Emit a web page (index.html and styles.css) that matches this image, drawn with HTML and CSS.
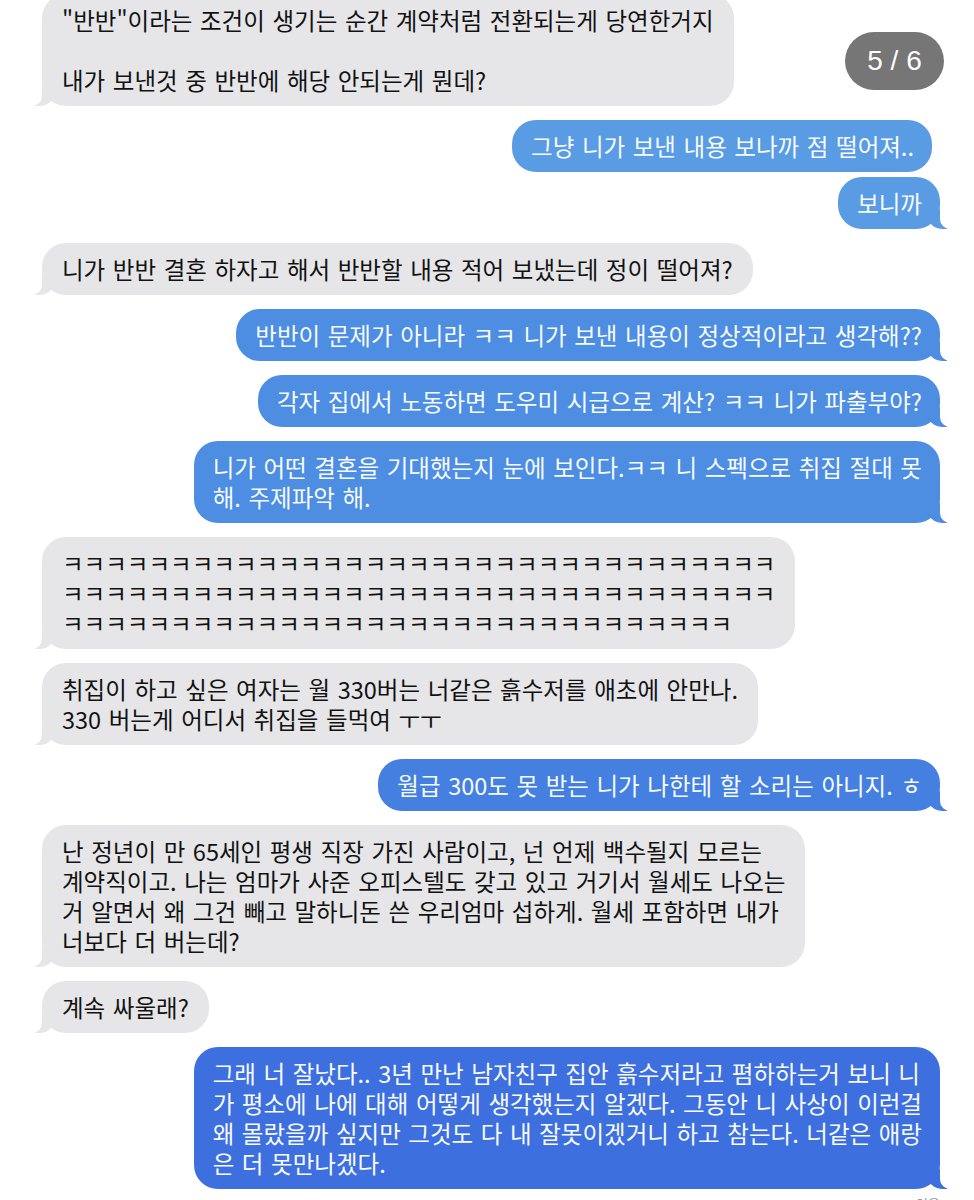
FILE: index.html
```html
<!DOCTYPE html>
<html lang="ko">
<head>
<meta charset="utf-8">
<title>대화</title>
<link rel="stylesheet" href="styles.css">
</head>
<body>
<div class="badge">5 / 6</div>
<main class="chat">
  <div class="msg in">"반반"이라는 조건이 생기는 순간 계약처럼 전환되는게 당연한거지<br><br>내가 보낸것 중 반반에 해당 안되는게 뭔데?</div>
  <div class="group">
    <div class="msg out c1 notail">그냥 니가 보낸 내용 보나까 점 떨어져..</div>
    <div class="msg out c1">보니까</div>
  </div>
  <div class="msg in">니가 반반 결혼 하자고 해서 반반할 내용 적어 보냈는데 정이 떨어져?</div>
  <div class="msg out c2">반반이 문제가 아니라 ㅋㅋ 니가 보낸 내용이 정상적이라고 생각해??</div>
  <div class="msg out c2">각자 집에서 노동하면 도우미 시급으로 계산? ㅋㅋ 니가 파출부야?</div>
  <div class="msg out c2">니가 어떤 결혼을 기대했는지 눈에 보인다.ㅋㅋ 니 스펙으로 취집 절대 못<br>해. 주제파악 해.</div>
  <div class="msg in">ㅋㅋㅋㅋㅋㅋㅋㅋㅋㅋㅋㅋㅋㅋㅋㅋㅋㅋㅋㅋㅋㅋㅋㅋㅋㅋㅋㅋㅋㅋㅋㅋㅋ<br>ㅋㅋㅋㅋㅋㅋㅋㅋㅋㅋㅋㅋㅋㅋㅋㅋㅋㅋㅋㅋㅋㅋㅋㅋㅋㅋㅋㅋㅋㅋㅋㅋㅋ<br>ㅋㅋㅋㅋㅋㅋㅋㅋㅋㅋㅋㅋㅋㅋㅋㅋㅋㅋㅋㅋㅋㅋㅋㅋㅋㅋㅋㅋㅋㅋㅋ</div>
  <div class="msg in">취집이 하고 싶은 여자는 월 330버는 너같은 흙수저를 애초에 안만나.<br>330 버는게 어디서 취집을 들먹여 ㅜㅜ</div>
  <div class="msg out c3">월급 300도 못 받는 니가 나한테 할 소리는 아니지. ㅎ</div>
  <div class="msg in">난 정년이 만 65세인 평생 직장 가진 사람이고, 넌 언제 백수될지 모르는<br>계약직이고. 나는 엄마가 사준 오피스텔도 갖고 있고 거기서 월세도 나오는<br>거 알면서 왜 그건 빼고 말하니돈 쓴 우리엄마 섭하게. 월세 포함하면 내가<br>너보다 더 버는데?</div>
  <div class="msg in">계속 싸울래?</div>
  <div class="msg out c4">그래 너 잘났다.. 3년 만난 남자친구 집안 흙수저라고 폄하하는거 보니 니<br>가 평소에 나에 대해 어떻게 생각했는지 알겠다. 그동안 니 사상이 이런걸<br>왜 몰랐을까 싶지만 그것도 다 내 잘못이겠거니 하고 참는다. 너같은 애랑<br>은 더 못만나겠다.</div>
  <div class="read">읽음</div>
</main>
</body>
</html>
```

FILE: styles.css
```css
html, body {
  margin: 0;
  background: #ffffff;
}

body {
  font-family: "Noto Sans CJK KR", "Noto Sans", sans-serif;
  position: relative;
  overflow: hidden;
  height: 1200px;
}

.chat {
  display: flex;
  flex-direction: column;
  gap: 14px;
  padding: 0 34px 0 42px;
  margin-top: -6px;
}

.group {
  display: flex;
  flex-direction: column;
  align-items: flex-end;
  gap: 5px;
}

.msg {
  position: relative;
  white-space: nowrap;
  font-size: 23.5px;
  line-height: 30px;
  word-spacing: 1px;
  padding: 11px 20px;
  border-radius: 24px;
}

.in {
  align-self: flex-start;
  background: #e6e6e9;
  color: #121212;
}

.out {
  align-self: flex-end;
  color: #f7fbff;
  padding: 11px 18px 11px 19px;
}

.c1 { background: #5a9ce3; }
.c2 { background: #4d8de2; }
.c3 { background: #4580e0; }
.c4 { background: #3e6fdf; }

.group .out { align-self: auto; }

.notail {
  margin-right: 8px;
}

.in::before,
.in::after,
.out::before,
.out::after {
  content: "";
  position: absolute;
  bottom: 0;
  height: 20px;
}

.in::before {
  left: -7px;
  width: 20px;
  background: #e6e6e9;
  border-bottom-right-radius: 15px;
}

.in::after {
  left: -10px;
  width: 10px;
  background: #ffffff;
  border-bottom-right-radius: 10px;
}

.out::before {
  right: -7px;
  width: 20px;
  background: inherit;
  border-bottom-left-radius: 15px;
}

.out::after {
  right: -10px;
  width: 10px;
  background: #ffffff;
  border-bottom-left-radius: 10px;
}

.notail::before,
.notail::after {
  display: none;
}

.read {
  align-self: flex-end;
  font-size: 13px;
  line-height: 16px;
  color: #8e8e93;
  margin-top: -7px;
  margin-right: 0;
}

.badge {
  position: absolute;
  left: 845px;
  top: 32px;
  width: 99px;
  height: 58px;
  border-radius: 29px;
  background: #767676;
  color: #ffffff;
  font-family: "Liberation Sans", Arial, sans-serif;
  font-size: 28px;
  display: flex;
  align-items: center;
  justify-content: center;
  z-index: 2;
}
```
